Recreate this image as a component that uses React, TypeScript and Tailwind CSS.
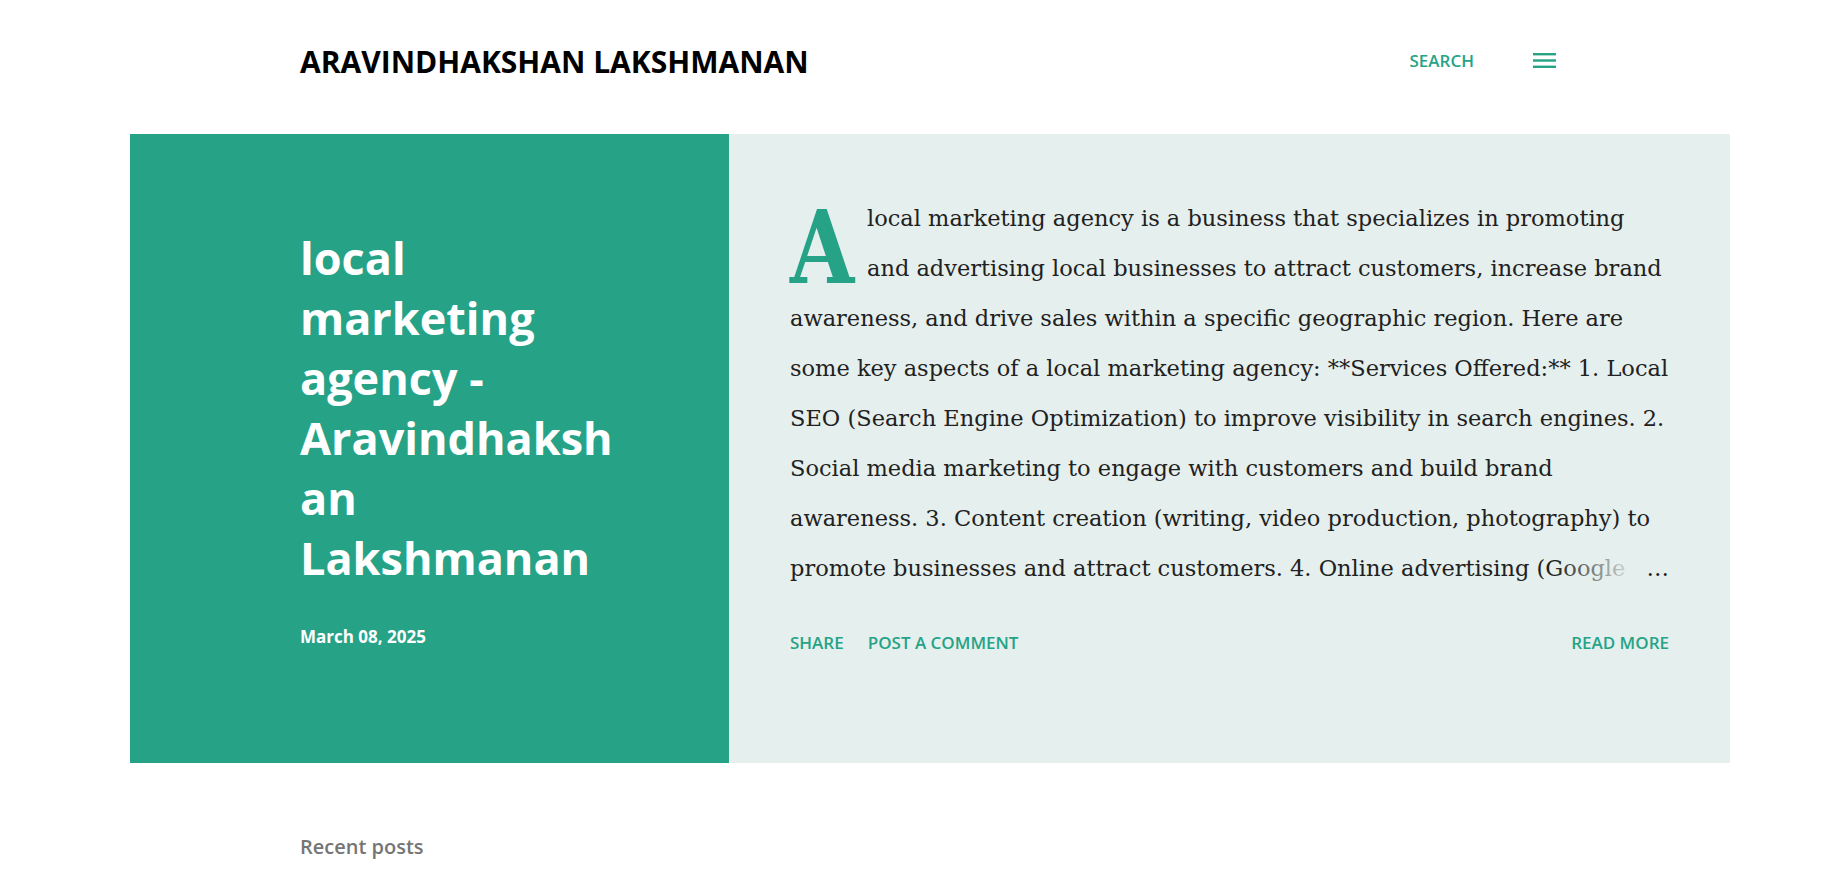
import React from "react";

export default function App() {
  const lines = [
    "awareness, and drive sales within a specific geographic region. Here are",
    "some key aspects of a local marketing agency: **Services Offered:** 1. Local",
    "SEO (Search Engine Optimization) to improve visibility in search engines. 2.",
    "Social media marketing to engage with customers and build brand",
    "awareness. 3. Content creation (writing, video production, photography) to",
  ];
  return (
    <div className="min-h-[873px] w-full bg-white font-['Open_Sans',sans-serif]">
      {/* Header */}
      <header className="ml-[300px] flex h-[124px] w-[1256px] items-center justify-between">
        <h1 className="text-[30px] font-bold leading-none tracking-normal text-black">
          ARAVINDHAKSHAN LAKSHMANAN
        </h1>
        <div className="-mt-[4px] flex items-center gap-[59px]">
          <span className="text-[17px] font-semibold leading-none text-[#26a387]">SEARCH</span>
          <svg width="23" height="15" viewBox="0 0 23 15" className="block">
            <rect x="0" y="0" width="23" height="2.4" fill="#26a387" />
            <rect x="0" y="6.3" width="23" height="2.4" fill="#26a387" />
            <rect x="0" y="12.6" width="23" height="2.4" fill="#26a387" />
          </svg>
        </div>
      </header>

      {/* Featured post */}
      <div className="ml-[130px] mt-[10px] flex h-[629px] w-[1600px]">
        <div className="w-[599px] shrink-0 bg-[#26a387] pl-[170px] pt-[94px]">
          <h2 className="text-[45px] font-bold leading-[60px] text-white">
            <div>local</div>
            <div>marketing</div>
            <div>agency -</div>
            <div>Aravindhaksh</div>
            <div>an</div>
            <div>Lakshmanan</div>
          </h2>
          <div className="mt-[37px] text-[17px] font-bold leading-[24px] text-white">March 08, 2025</div>
        </div>

        <div className="min-w-0 flex-1 bg-[#e5efed] px-[61px] pt-[59px]">
          <div className="font-['DejaVu_Serif',serif] text-[22.5px] leading-[50px] text-[#212121]">
            <div className="flex h-[100px]">
              <div className="h-[100px] w-[77px] shrink-0">
                <div className="mt-[4px] origin-left scale-x-[0.82] font-['DejaVu_Serif',serif] text-[101px] font-bold leading-none text-[#26a387]">
                  A
                </div>
              </div>
              <div>
                <div className="whitespace-nowrap">local marketing agency is a business that specializes in promoting</div>
                <div className="whitespace-nowrap">and advertising local businesses to attract customers, increase brand</div>
              </div>
            </div>
            {lines.map((l) => (
              <div key={l} className="whitespace-nowrap">
                {l}
              </div>
            ))}
            <div className="flex whitespace-nowrap">
              <span className="relative">
                promote businesses and attract customers. 4. Online advertising (Google
                <span className="absolute right-0 top-0 h-full w-[70px] bg-gradient-to-r from-transparent to-[#e5efed]/85" />
              </span>
              <span className="ml-auto">…</span>
            </div>
          </div>

          <div className="mt-[38px] flex items-center text-[17px] font-semibold leading-[24px] text-[#26a387]">
            <span>SHARE</span>
            <span className="ml-[24px]">POST A COMMENT</span>
            <span className="ml-auto">READ MORE</span>
          </div>
        </div>
      </div>

      <div className="ml-[300px] mt-[70px] text-[20px] font-semibold leading-[28px] text-[#757575]">Recent posts</div>
    </div>
  );
}
